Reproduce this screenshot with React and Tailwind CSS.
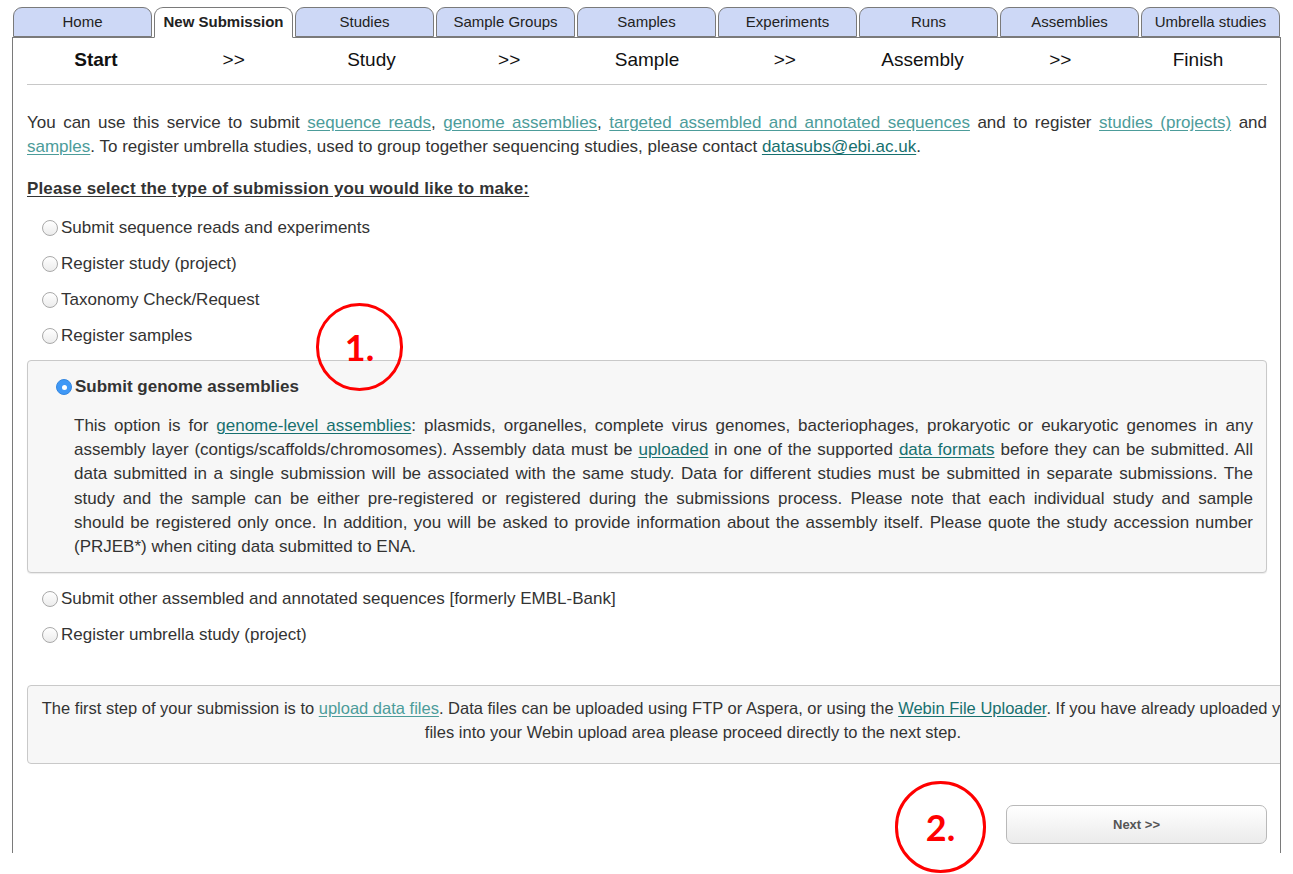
import { useState } from 'react'

const tabs = ["Home", "New Submission", "Studies", "Sample Groups", "Samples", "Experiments", "Runs", "Assemblies", "Umbrella studies"]
const steps = ["Start", ">>", "Study", ">>", "Sample", ">>", "Assembly", ">>", "Finish"]

const options = [
    { id: "reads", label: "Submit sequence reads and experiments" },
    { id: "study", label: "Register study (project)" },
    { id: "taxonomy", label: "Taxonomy Check/Request" },
    { id: "samples", label: "Register samples" },
    { id: "assembly", label: "Submit genome assemblies" },
    { id: "sequences", label: "Submit other assembled and annotated sequences [formerly EMBL-Bank]" },
    { id: "umbrella", label: "Register umbrella study (project)" },
]

function Link({ children, dark }) {
    return (
        <a href="#" className={`underline underline-offset-2 ${dark ? "text-[#17706f]" : "text-[#4c9c9a]"}`}>{children}</a>
    )
}

// one justified line of a paragraph, so the breaks follow the original
function Line({ children }) {
    return <span className="block text-justify [text-align-last:justify]">{children}</span>
}

function Radio({ checked, onClick }) {
    if (checked) {
        return (
            <span onClick={onClick} className="w-[16px] h-[16px] rounded-full bg-[#3f98f6] border border-[#3487e0] flex items-center justify-center shrink-0 cursor-pointer">
                <span className="w-[5px] h-[5px] rounded-full bg-white" />
            </span>
        )
    }
    return (
        <span onClick={onClick} className="w-[16px] h-[16px] rounded-full border border-[#a9a9a9] bg-gradient-to-b from-white to-[#ececec] shrink-0 cursor-pointer" />
    )
}

function Option({ option, selected, setSelected }) {
    return (
        <div className="h-[36px] flex items-center gap-[3px] pl-[15px]">
            <Radio checked={selected === option.id} onClick={() => setSelected(option.id)} />
            <span>{option.label}</span>
        </div>
    )
}

function Annotation({ label, className }) {
    return (
        <div className={`absolute rounded-full border-[3px] border-[#ff0000] flex items-center justify-center ${className}`}>
            <span className="font-['Lato'] font-bold text-[36px] text-[#ff0000] leading-none">{label}</span>
        </div>
    )
}

export default function App() {
    const [selected, setSelected] = useState("assembly")

    return (
        <div className="w-[1293px] h-[874px] bg-white relative overflow-hidden font-['Liberation_Sans',Arial,sans-serif] text-[17px] text-[#333]">
            <div className="pt-[7px] pl-[12px]">
                <div className="flex gap-[2px] pl-[1px] relative z-10">
                    {tabs.map(tab => (
                        <div
                            key={tab}
                            className={`w-[139px] h-[30px] rounded-t-[9px] border border-[#7a7a7a] flex items-center justify-center text-[15px] text-[#222] ${tab === "New Submission" ? "bg-white border-b-white font-bold -mb-px h-[31px]" : "bg-[#cdd8f6]"}`}
                        >
                            {tab}
                        </div>
                    ))}
                </div>

                <div className="w-[1269px] h-[816px] border-t border-l border-r border-[#7a7a7a] overflow-hidden pl-[14px] pr-[13px]">
                    <div className="grid grid-cols-9 h-[47px] pb-[2px] items-center border-b border-[#c8c8c8] text-[19px] text-[#111]">
                        {steps.map((step, i) => (
                            <div key={i} className={`text-center ${i === 0 ? "font-bold" : ""}`}>{step}</div>
                        ))}
                    </div>

                    <p className="mt-[26px] leading-[24px]">
                        <Line>You can use this service to submit <Link>sequence reads</Link>, <Link>genome assemblies</Link>, <Link>targeted assembled and annotated sequences</Link> and to register <Link>studies (projects)</Link> and</Line>
                        <Link>samples</Link>. To register umbrella studies, used to group together sequencing studies, please contact <Link dark>datasubs@ebi.ac.uk</Link>.
                    </p>

                    <p className="mt-[18px] leading-[24px] font-bold underline underline-offset-2 tracking-[0.15px]">Please select the type of submission you would like to make:</p>

                    <div className="mt-[9px]">
                        {options.slice(0, 4).map(o => (
                            <Option key={o.id} option={o} selected={selected} setSelected={setSelected} />
                        ))}
                    </div>

                    <div className="mt-[6px] h-[213px] bg-[#f7f7f7] border border-[#c9c9c9] rounded-[4px] shadow-[0_1px_1px_rgba(0,0,0,0.08)] pt-[14px] pl-[28px] pr-[13px]">
                        <div className="flex items-center gap-[3px] h-[24px]">
                            <Radio checked={selected === "assembly"} onClick={() => setSelected("assembly")} />
                            <span className="font-bold">Submit genome assemblies</span>
                        </div>
                        <p className="mt-[15px] ml-[18px] leading-[24.2px]">
                            <Line>This option is for <Link dark>genome-level assemblies</Link>: plasmids, organelles, complete virus genomes, bacteriophages, prokaryotic or eukaryotic genomes in any</Line>
                            <Line>assembly layer (contigs/scaffolds/chromosomes). Assembly data must be <Link dark>uploaded</Link> in one of the supported <Link dark>data formats</Link> before they can be submitted. All</Line>
                            <Line>data submitted in a single submission will be associated with the same study. Data for different studies must be submitted in separate submissions. The</Line>
                            <Line>study and the sample can be either pre-registered or registered during the submissions process. Please note that each individual study and sample</Line>
                            <Line>should be registered only once. In addition, you will be asked to provide information about the assembly itself. Please quote the study accession number</Line>
                            (PRJEB*) when citing data submitted to ENA.
                        </p>
                    </div>

                    <div className="mt-[8px]">
                        {options.slice(5).map(o => (
                            <Option key={o.id} option={o} selected={selected} setSelected={setSelected} />
                        ))}
                    </div>

                    <div className="mt-[32px] w-[1332px] h-[79px] bg-[#f7f7f7] border border-[#c9c9c9] rounded-[4px] pt-[10px] text-center text-[16.5px] leading-[24px]">
                        <span className="block whitespace-nowrap pr-[40px]">The first step of your submission is to <Link>upload data files</Link>. Data files can be uploaded using FTP or Aspera, or using the <Link dark>Webin File Uploader</Link>. If you have already uploaded your</span>
                        <span className="block">files into your Webin upload area please proceed directly to the next step.</span>
                    </div>

                    <div className="mt-[41px] flex justify-end">
                        <button className="w-[261px] h-[39px] rounded-[7px] border border-[#b9b9b9] bg-gradient-to-b from-white to-[#ebebeb] text-[13px] font-bold text-[#555] cursor-pointer">
                            Next &gt;&gt;
                        </button>
                    </div>
                </div>
            </div>

            <Annotation label="1." className="left-[316px] top-[303px] w-[87px] h-[88px]" />
            <Annotation label="2." className="left-[895px] top-[781px] w-[91px] h-[92px]" />
        </div>
    )
}
